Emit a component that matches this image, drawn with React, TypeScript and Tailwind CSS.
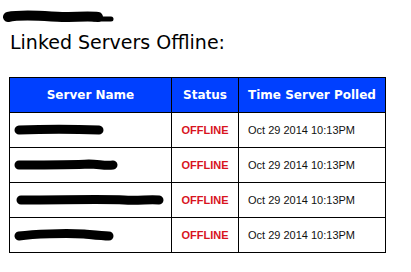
import React from "react";

function Blob({ w, d, sw = 9 }: { w: number; d: string; sw?: number }) {
  return (
    <svg width={w} height={14} viewBox={`0 0 ${w} 14`} className="block">
      <path d={d} stroke="#000" strokeWidth={sw} strokeLinecap="round" strokeLinejoin="round" fill="none" />
    </svg>
  );
}

const rows = [
  { w: 90, d: "M5 7 C 30 6, 60 6, 85 7" },
  { w: 104, d: "M5 7 C 40 7, 60 7, 75 6 C 85 6, 90 8, 99 7" },
  { w: 150, d: "M7 7 C 50 7, 90 6, 110 7 C 125 8, 135 6, 145 7" },
  { w: 100, d: "M5 8 C 20 6, 50 5, 70 6 C 80 7, 88 8, 95 8" },
];

const hdr = { fontFamily: '"DejaVu Sans", Verdana, sans-serif' };
const arial = { fontFamily: '"Liberation Sans", Arial, sans-serif' };

export default function App() {
  return (
    <div className="w-[411px] h-[272px] bg-white relative overflow-hidden">
      <div className="pt-[10px] pl-[2px]">
        <svg width={114} height={14} viewBox="0 0 114 14" className="block">
          <path d="M6 7 C 20 4, 40 6, 60 7 C 75 7, 88 6, 96 7" stroke="#000" strokeWidth={10} strokeLinecap="round" fill="none" />
          <path d="M92 9 C 100 9, 106 9, 109 9" stroke="#000" strokeWidth={5} strokeLinecap="round" fill="none" />
        </svg>
      </div>
      <div className="mt-[7px] ml-[10px] text-[19px] leading-[22px] text-black" style={hdr}>
        Linked Servers Offline:
      </div>
      <table className="mt-[24px] ml-[9px] border-collapse">
        <thead>
          <tr className="h-[35px] bg-[#0040ff]">
            <th className="w-[162px] border border-black text-white text-[12px] font-bold text-center p-0" style={hdr}>
              Server Name
            </th>
            <th className="w-[67px] border border-black text-white text-[12px] font-bold text-center p-0" style={hdr}>
              Status
            </th>
            <th className="w-[147px] border border-black text-white text-[12px] font-bold text-center p-0" style={hdr}>
              Time Server Polled
            </th>
          </tr>
        </thead>
        <tbody>
          {rows.map((r, i) => (
            <tr key={i} className="h-[35px]">
              <td className="border border-black p-0 pl-[4px]">
                <Blob w={r.w} d={r.d} />
              </td>
              <td className="border border-black p-0 text-center text-[11px] font-bold text-[#d8141e]" style={arial}>
                OFFLINE
              </td>
              <td className="border border-black p-0 pl-[9px] text-[11px] text-[#111]" style={arial}>
                Oct 29 2014 10:13PM
              </td>
            </tr>
          ))}
        </tbody>
      </table>
    </div>
  );
}
